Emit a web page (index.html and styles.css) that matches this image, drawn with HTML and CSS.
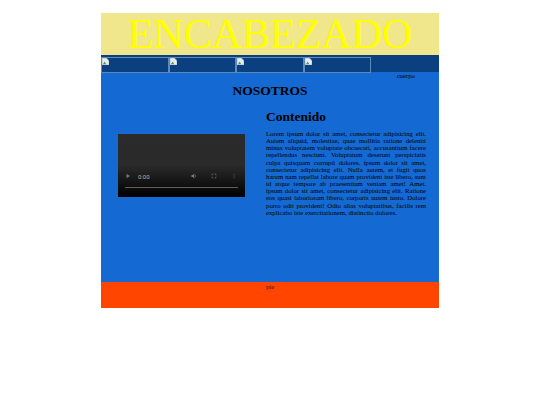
FILE: index.html
```html
<!DOCTYPE html>
<html lang="es">
<head>
<meta charset="utf-8">
<title>Encabezado</title>
<link rel="stylesheet" href="styles.css">
</head>
<body>
<div class="page">
  <header class="head">ENCABEZADO</header>
  <nav class="nav">
    <a class="nav-item"><svg class="broken" viewBox="0 0 8 8"><path d="M0 0h5l3 3v5H0z" fill="#e8eef0"/><path d="M1 7l2-3 2 3z" fill="#4d9a50"/><path d="M0 0h5l3 3v5H0z" fill="none" stroke="#a8b0b8" stroke-width=".8"/></svg></a>
    <a class="nav-item"><svg class="broken" viewBox="0 0 8 8"><path d="M0 0h5l3 3v5H0z" fill="#e8eef0"/><path d="M1 7l2-3 2 3z" fill="#4d9a50"/><path d="M0 0h5l3 3v5H0z" fill="none" stroke="#a8b0b8" stroke-width=".8"/></svg></a>
    <a class="nav-item"><svg class="broken" viewBox="0 0 8 8"><path d="M0 0h5l3 3v5H0z" fill="#e8eef0"/><path d="M1 7l2-3 2 3z" fill="#4d9a50"/><path d="M0 0h5l3 3v5H0z" fill="none" stroke="#a8b0b8" stroke-width=".8"/></svg></a>
    <a class="nav-item"><svg class="broken" viewBox="0 0 8 8"><path d="M0 0h5l3 3v5H0z" fill="#e8eef0"/><path d="M1 7l2-3 2 3z" fill="#4d9a50"/><path d="M0 0h5l3 3v5H0z" fill="none" stroke="#a8b0b8" stroke-width=".8"/></svg></a>
  </nav>
  <main class="body">
    <div class="label">cuerpo</div>
    <h1 class="title">NOSOTROS</h1>
    <div class="cols">
      <div class="video">
        <div class="controls">
          <svg class="ctl" viewBox="0 0 6 6"><path d="M1.5 1v4l3.5-2z" fill="#7a7a7a"/></svg>
          <span class="time">0:00</span>
          <svg class="ctl vol" viewBox="0 0 6 6"><path d="M.5 2h1.2L3.2.8v4.4L1.7 4H.5z" fill="#7a7a7a"/><path d="M4 1.6a2 2 0 0 1 0 2.8" fill="none" stroke="#7a7a7a" stroke-width=".6"/></svg>
          <svg class="ctl full" viewBox="0 0 6 6"><path d="M1 2.3V1h1.3M3.7 1H5v1.3M5 3.7V5H3.7M2.3 5H1V3.7" fill="none" stroke="#7a7a7a" stroke-width=".6"/></svg>
          <svg class="ctl more" viewBox="0 0 6 6"><path d="M3 .8v.8M3 2.6v.8M3 4.4v.8" stroke="#7a7a7a" stroke-width=".8"/></svg>
        </div>
        <div class="track"></div>
      </div>
      <article class="text">
        <h2 class="subtitle">Contenido</h2>
        <p class="para">Lorem ipsum dolor sit amet, consectetur adipisicing elit. Autem aliquid, molestiae, quae mollitia ratione deleniti minus voluptatem voluptate obcaecati, accusantium facere repellendus nesciunt. Voluptatum deserunt perspiciatis culpa quisquam corrupti dolores. ipsum dolor sit amet, consectetur adipisicing elit. Nulla autem, et fugit quos harum nam repellat labore quam provident iste libero, sunt id atque tempore ab praesentium veniam amet! Amet. ipsum dolor sit amet, consectetur adipisicing elit. Ratione eos quasi laboriosam libero, corporis autem iusto. Dolore porro odit provident! Odio alias voluptatibus, facilis rem explicabo iste exercitationem, distinctio dolores.</p>
      </article>
    </div>
  </main>
  <footer class="foot">pie</footer>
</div>
</body>
</html>
```
FILE: styles.css
```css
* { box-sizing: border-box; }
html, body { margin: 0; padding: 0; background: #fff; }
body { padding-top: 13px; font-family: "Liberation Serif", "Times New Roman", serif; color: #000; }
.page { width: 338px; margin: 0 auto; }
.head { height: 42px; background: #f0e68c; color: #ff0; font-size: 42px; line-height: 42px; text-align: center; }
.nav { height: 17px; background: #0a4080; padding-top: 2px; display: flex; align-items: flex-start; }
.nav-item { display: block; width: 67.5px; height: 16px; border: .6px solid #5f89bd; flex: none; position: relative; z-index: 1; }
.broken { display: block; width: 7px; height: 7px; }
.body { height: 210px; background: #1469d2; }
.label { font-size: 6.75px; line-height: 7px; text-align: right; padding-right: 24px; }
.title { margin: 0; font-size: 13.5px; line-height: 16px; padding-top: 4px; text-align: center; }
.cols { display: flex; align-items: flex-start; padding: 10px 0 0 17px; }
.video { width: 127px; height: 63px; margin-top: 25px; background: linear-gradient(#2b2b2b 0, #2a2a2a 50%, #000 100%); padding: 38px 7px 0; flex: none; }
.controls { display: flex; align-items: center; height: 8px; padding-right: 1px; }
.ctl { width: 6px; height: 6px; flex: none; }
.time { color: #b0b0b0; font: 6px "Roboto", "Liberation Sans", sans-serif; margin-left: 7px; }
.vol { margin-left: auto; margin-right: 14px; }
.full { margin-right: 14px; }
.track { height: 1.3px; margin-top: 6.5px; background: #5e5e5e; }
.text { width: 160px; margin-left: 21px; flex: none; }
.subtitle { margin: 0; font-size: 13.5px; line-height: 16px; }
.para { margin: 5px 0 0; font-size: 6.75px; line-height: 7.15px; text-align: justify; color: #000; }
.foot { height: 26px; background: #ff4500; font-size: 6.75px; line-height: 9px; text-align: center; color: #3a1000; }
```
